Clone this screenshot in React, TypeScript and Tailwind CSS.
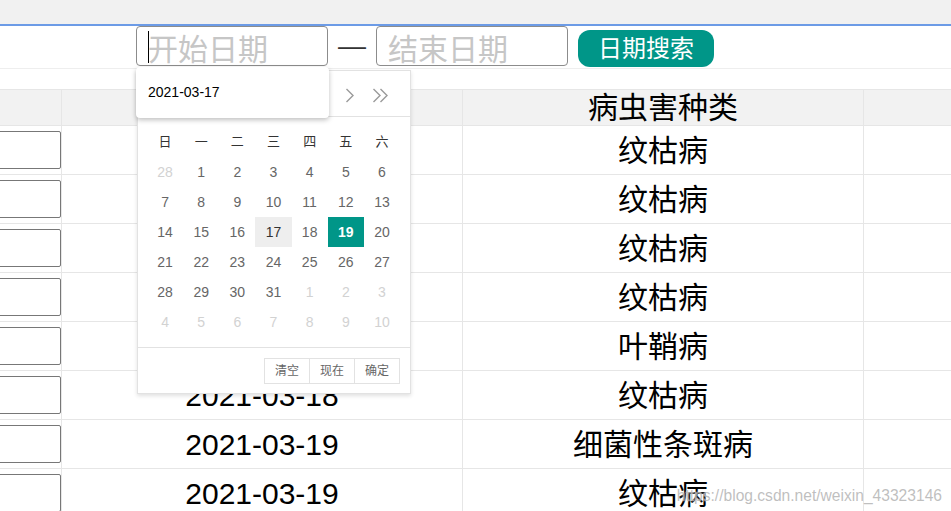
import React from 'react';

// 表格数据
const rows = [
  { date: '2021-03-17', kind: '纹枯病' },
  { date: '2021-03-17', kind: '纹枯病' },
  { date: '2021-03-17', kind: '纹枯病' },
  { date: '2021-03-18', kind: '纹枯病' },
  { date: '2021-03-18', kind: '叶鞘病' },
  { date: '2021-03-18', kind: '纹枯病' },
  { date: '2021-03-19', kind: '细菌性条斑病' },
  { date: '2021-03-19', kind: '纹枯病' },
];

const weekLabels = ['日', '一', '二', '三', '四', '五', '六'];

// 2021年3月的日历格子 (6 行 x 7 列)
const buildDays = () => {
  const days: { n: number; other: boolean }[] = [{ n: 28, other: true }];
  for (let d = 1; d <= 31; d++) days.push({ n: d, other: false });
  let next = 1;
  while (days.length < 42) days.push({ n: next++, other: true });
  return days;
};

const Chevron = ({ double }: { double?: boolean }) => (
  <svg width={double ? 17 : 10} height="15" viewBox={double ? '0 0 17 15' : '0 0 10 15'} fill="none">
    <path d="M1.5 1 L8 7.5 L1.5 14" stroke="#9a9a9a" strokeWidth="1.4" />
    {double && <path d="M8.5 1 L15 7.5 L8.5 14" stroke="#9a9a9a" strokeWidth="1.4" />}
  </svg>
);

const Calendar = () => {
  const days = buildDays();
  return (
    <div className="absolute left-[137px] top-[70px] w-[274px] h-[324px] bg-white border border-[#e2e2e2] shadow-[0_2px_4px_rgba(0,0,0,0.12)] z-10">
      {/* 头部：年月切换 */}
      <div className="h-[46px] border-b border-[#e2e2e2] flex items-center justify-between pl-[15px] pr-[15px] pt-[4px]">
        <div className="flex items-center text-[14px] text-[#333]">2021年 3月</div>
        <div className="flex items-center">
          <span className="w-[30px] flex justify-center"><Chevron /></span>
          <span className="w-[30px] flex justify-center"><Chevron double /></span>
        </div>
      </div>
      {/* 日期表格 */}
      <div className="pl-[9px] pr-[10px] pt-[10px] pb-[10px]">
        <div className="grid grid-cols-7">
          {weekLabels.map((w) => (
            <div key={w} className="h-[30px] flex items-center justify-center text-[13px] text-[#333]">
              {w}
            </div>
          ))}
          {days.map((d, i) => {
            let cls = 'text-[#666]';
            if (d.other) cls = 'text-[#d2d2d2]';
            else if (d.n === 17) cls = 'bg-[#eeeeee] text-[#333]';
            else if (d.n === 19) cls = 'bg-[#009688] text-white font-bold';
            return (
              <div key={i} className={`h-[30px] flex items-center justify-center text-[14px] ${cls}`}>
                {d.n}
              </div>
            );
          })}
        </div>
      </div>
      {/* 底部按钮 */}
      <div className="h-[46px] border-t border-[#e2e2e2] flex items-start justify-end pt-[10px] pr-[10px]">
        <div className="flex">
          {['清空', '现在', '确定'].map((t, i) => (
            <button
              key={t}
              className={`w-[46px] h-[26px] border border-[#e2e2e2] text-[12px] text-[#666] bg-white ${i > 0 ? '-ml-px' : ''}`}
            >
              {t}
            </button>
          ))}
        </div>
      </div>
    </div>
  );
};

export default function App() {
  return (
    <div className="relative w-full h-[511px] overflow-hidden bg-white font-['Liberation_Sans','Noto_Sans_CJK_SC',sans-serif]">
      <div className="h-[24px] bg-[#f1f1f1]" />
      <div className="h-[2px] bg-[#6c9be6]" />

      {/* 日期搜索表单 */}
      <div className="h-[43px] border-b border-[#eeeeee] flex items-start pl-[136px]">
        <div className="relative">
          <input
            className="w-[192px] h-[40px] border border-[#8c8c8c] rounded-[4px] pl-[11px] pt-[6px] text-[30px] outline-none placeholder:text-[#c6c6c6]"
            placeholder="开始日期"
          />
          <span className="absolute left-[12px] top-[5px] w-px h-[32px] bg-black" />
        </div>
        <span className="mx-[10px] w-[28px] h-[40px] flex items-center justify-center text-[28px] text-[#333] font-['Liberation_Sans',sans-serif]">—</span>
        <input
          className="w-[192px] h-[40px] border border-[#8c8c8c] rounded-[4px] pl-[11px] pt-[6px] text-[30px] outline-none placeholder:text-[#c6c6c6]"
          placeholder="结束日期"
        />
        <button className="ml-[10px] mt-[4px] w-[136px] h-[37px] rounded-[12px] bg-[#009688] text-white text-[24px] leading-none">
          日期搜索
        </button>
      </div>

      {/* 数据表格 */}
      <div className="mt-[20px] border-t border-[#e6e6e6]">
        <div className="grid grid-cols-[62px_401px_401px_1fr] h-[36px] bg-[#f2f2f2] border-b border-[#e6e6e6] text-[30px] leading-none text-black">
          <div className="border-r border-[#e6e6e6]" />
          <div className="border-r border-[#e6e6e6] flex items-center justify-center">日期</div>
          <div className="border-r border-[#e6e6e6] flex items-center justify-center">病虫害种类</div>
          <div />
        </div>
        {rows.map((r, i) => (
          <div key={i} className="grid grid-cols-[62px_401px_401px_1fr] h-[49px] border-b border-[#e6e6e6] text-[30px] text-black">
            <div className="border-r border-[#e6e6e6] pt-[5px] overflow-hidden">
              <div className="ml-[-30px] w-[91px] h-[38px] border border-[#777] rounded-[2px]" />
            </div>
            <div className="border-r border-[#e6e6e6] flex items-center justify-center">{r.date}</div>
            <div className="border-r border-[#e6e6e6] flex items-center justify-center">{r.kind}</div>
            <div />
          </div>
        ))}
      </div>

      {/* 浏览器自动填充下拉 */}
      <div className="absolute left-[136px] top-[67px] w-[193px] h-[51px] bg-white rounded-[4px] shadow-[0_2px_5px_rgba(0,0,0,0.25)] z-20 flex items-center pl-[12px] text-[14px] text-black">
        2021-03-17
      </div>

      <Calendar />

      {/* 水印 */}
      <div className="absolute right-[9px] top-[484px] text-[15.6px] text-[rgba(170,170,170,0.75)] [text-shadow:0_0_2px_#fff] z-30">
        https://blog.csdn.net/weixin_43323146
      </div>
    </div>
  );
}
